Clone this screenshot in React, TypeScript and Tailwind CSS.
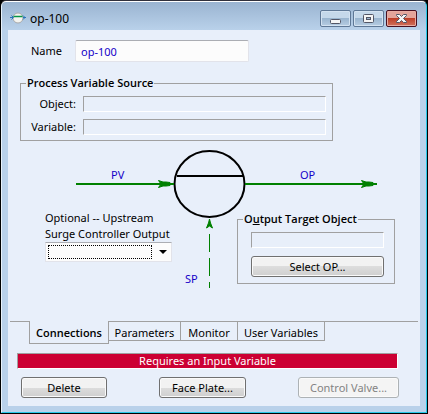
import type { ButtonHTMLAttributes, ReactNode } from "react";

function PushButton({ className = "", ...props }: ButtonHTMLAttributes<HTMLButtonElement>) {
  return (
    <button
      type="button"
      className={`h-[21px] rounded-[3px] border border-[#707070] bg-linear-to-b from-[#f2f2f2] from-50% via-[#dddddd] via-50% to-[#cfcfcf] leading-4 shadow-[inset_0_0_0_1px_#fafafa] disabled:border-[#adb2b5] disabled:bg-[#f4f4f4] disabled:bg-none disabled:text-[#838383] ${className}`}
      {...props}
    />
  );
}

function Group({ title, className = "", children }: { title: ReactNode; className?: string; children: ReactNode }) {
  return (
    <fieldset className={`min-w-0 border border-[#a0a0a0] ${className}`}>
      <legend className="ml-[5px] px-px font-['Open_Sans','Liberation_Sans',sans-serif] leading-4 font-semibold whitespace-nowrap">{title}</legend>
      {children}
    </fieldset>
  );
}

const sunken = "h-4 min-w-0 border border-t-[#a0a0a0] border-l-[#a0a0a0] border-r-white border-b-white bg-transparent px-1 outline-none";

function LoopDiagram() {
  return (
    <svg className="col-start-1 row-start-1 h-[144px] w-[412px]" viewBox="8 146 412 144" aria-label="Control loop">
      <ellipse cx="209.5" cy="184" rx="35" ry="33" fill="none" stroke="#000" strokeWidth="2" />
      <path d="M177 176H243" stroke="#000" strokeWidth="2" />
      <g stroke="#008000" fill="#008000">
        <path d="M76 184H174M245 184H377" strokeWidth="2" />
        <path d="M158.5 180.5L163 182H166L170 182.5V185.5L166 186H163L158.5 187.5L161 184Z M361.5 180.5L366 182H369L373 182.5V185.5L369 186H366L361.5 187.5L364 184Z" strokeWidth="1" />
        <path d="M209.5 219L210.5 223L212.5 228L209.5 226L206.5 228L208.5 223Z" />
        <path d="M209.5 234V288" strokeDasharray="18 6" strokeWidth="1" />
      </g>
      <g fill="#1400c8" fontSize="11">
        <text x="111" y="179">PV</text>
        <text x="300" y="179">OP</text>
        <text x="185" y="283">SP</text>
      </g>
    </svg>
  );
}

function TitleBar() {
  const box = "flex h-[17px] w-[31px] items-center justify-center rounded-[2px] border border-[#5f7896] bg-linear-to-b from-[#c5d8ea] from-50% via-[#9ab5cf] via-50% to-[#b7cde3] shadow-[inset_0_0_0_1px_#d3e2f1]";
  return (
    <header className="flex h-7 items-center pt-1 pr-[9px] pl-2">
      <svg width="16" height="12" viewBox="0 0 16 12" aria-hidden="true">
        <circle cx="8" cy="6" r="5" fill="#f4f4f0" stroke="#aaa" />
        <path d="M3.5 4.5h9" stroke="#079447" strokeWidth="1.5" />
        <path d="M0 5.5h3M13 5.5h3M1.5 3.5L3.5 5.5L1.5 7.5M13 3.5L15 5.5L13 7.5" stroke="#2876b8" fill="none" />
      </svg>
      <h1 className="ml-1 flex-1 pt-[2px] text-[12px] leading-4">op-100</h1>
      <div className="flex gap-[2px]">
        <button type="button" aria-label="Minimize" className={box}>
          <svg width="13" height="11" viewBox="0 0 13 11"><rect x="1.5" y="6.5" width="10" height="4" rx="1" fill="#f5f5f5" stroke="#535666" /></svg>
        </button>
        <button type="button" aria-label="Maximize" className={box}>
          <svg width="13" height="11" viewBox="0 0 13 11"><rect x="1.5" y="1.5" width="10" height="8" rx="1" fill="#f5f5f5" stroke="#535666" /><rect x="4.5" y="4.5" width="4" height="2" fill="#9eb7d0" stroke="#535666" /></svg>
        </button>
        <button type="button" aria-label="Close" className="flex h-[17px] w-[31px] items-center justify-center rounded-[2px] border border-[#481020] bg-linear-to-b from-[#e3a49a] from-50% via-[#bd3e27] via-50% to-[#d0715c] shadow-[inset_0_0_0_1px_#e8aca2]">
          <svg width="13" height="11" viewBox="0 0 13 11"><path d="M1.5 1.5H4.5L6.5 3.5L8.5 1.5H11.5V2.5L8.5 5.5L11.5 8.5V9.5H8.5L6.5 7.5L4.5 9.5H1.5V8.5L4.5 5.5L1.5 2.5Z" fill="#f5f5f5" stroke="#535666" /></svg>
        </button>
      </div>
    </header>
  );
}

export default function App() {
  const tab = "h-5 border border-l-0 border-[#a0a0a0] pt-[3px]";
  return (
    <div className="bg-black font-['Noto_Sans','Liberation_Sans',sans-serif] text-[11px] leading-4 text-black">
      <div className="rounded-t-[6px] border border-t-[#30303c] border-r-black border-b-black border-l-black">
        <div className="rounded-t-[5px] border border-t-white border-r-[#28c8e8] border-b-[#28c8e8] border-l-[#e8f2fb] bg-linear-to-b from-[#9ab4d1] to-[#b9d1ea] to-[28px]">
          <TitleBar />
          <main className="mx-[6px] mb-[6px] bg-[#e8effa] pt-[10px] pb-2">
            <div className="ml-[23px] flex items-center">
              <label htmlFor="name" className="w-11">Name</label>
              <input id="name" defaultValue="op-100" className="h-[22px] w-[174px] rounded-[2px] border border-[#e2e3ea] border-t-[#abadb3] bg-[#fcfcfc] px-[5px] text-[#1400c8] outline-none" />
            </div>

            <Group title="Process Variable Source" className="mt-[13px] ml-3 h-[66px] w-[313px]">
              <div className="mt-[5px] mr-[6px] grid grid-cols-[55px_1fr] items-center gap-x-[7px] gap-y-[7px]">
                <label htmlFor="object" className="text-right">Object:</label>
                <input id="object" readOnly className={sunken} />
                <label htmlFor="variable" className="text-right">Variable:</label>
                <input id="variable" readOnly className={sunken} />
              </div>
            </Group>

            <div className="mt-[5px] grid">
              <LoopDiagram />
              <div className="col-start-1 row-start-1 flex items-start pt-[64px]">
                <div className="ml-[37px] w-[127px]">
                  <label htmlFor="upstream" className="block whitespace-nowrap">
                    Optional -- Upstream
                    <br />
                    Surge Controller Output
                  </label>
                  <div className="grid h-5 items-center border border-[#e2e3ea] border-t-[#abadb3] bg-[#fcfcfc]">
                    <select id="upstream" className="col-start-1 row-start-1 mr-[19px] ml-[2px] h-[14px] appearance-none border border-dotted border-black bg-transparent outline-none">
                      <option value="" />
                    </select>
                    <svg className="pointer-events-none col-start-1 row-start-1 mr-1 justify-self-end" width="8" height="4" viewBox="0 0 8 4" aria-hidden="true">
                      <path d="M0 0H8L4 4Z" />
                    </svg>
                  </div>
                </div>
                <Group title={<>O<u>u</u>tput Target Object</>} className="mt-px ml-[65px] h-[73px] w-[158px]">
                  <div className="mt-[5px] mr-[10px] ml-[13px] flex flex-col gap-2">
                    <input aria-label="Output target object" readOnly className={sunken} />
                    <PushButton>Select OP...</PushButton>
                  </div>
                </Group>
              </div>
            </div>

            <nav role="tablist" className="mx-[2px] mt-[31px] flex h-[23px] items-start">
              <span className="w-[19px] border-t border-[#a0a0a0]" />
              <button type="button" role="tab" aria-selected="true" className="h-[23px] w-20 border border-t-0 border-[#a0a0a0] pt-[2px] font-['Open_Sans','Liberation_Sans',sans-serif] font-semibold">
                Connections
              </button>
              <button type="button" role="tab" aria-selected="false" className={`${tab} w-[72px]`}>Parameters</button>
              <button type="button" role="tab" aria-selected="false" className={`${tab} w-[57px]`}>Monitor</button>
              <button type="button" role="tab" aria-selected="false" className={`${tab} w-[87px]`}>User Variables</button>
              <span className="flex-1 border-t border-[#a0a0a0]" />
            </nav>

            <p role="status" className="mt-[9px] mr-[22px] ml-[9px] h-4 border border-t-[#a0a0a0] border-r-white border-b-white border-l-[#a0a0a0] bg-[#cc0033] text-center leading-[14px] text-white">
              Requires an Input Variable
            </p>
            <div className="mt-2 mr-[21px] ml-[13px] flex justify-between">
              <PushButton className="w-[86px]">Delete</PushButton>
              <PushButton className="w-[87px]">Face Plate...</PushButton>
              <PushButton disabled className="w-[101px]">Control Valve...</PushButton>
            </div>
          </main>
        </div>
      </div>
    </div>
  );
}
